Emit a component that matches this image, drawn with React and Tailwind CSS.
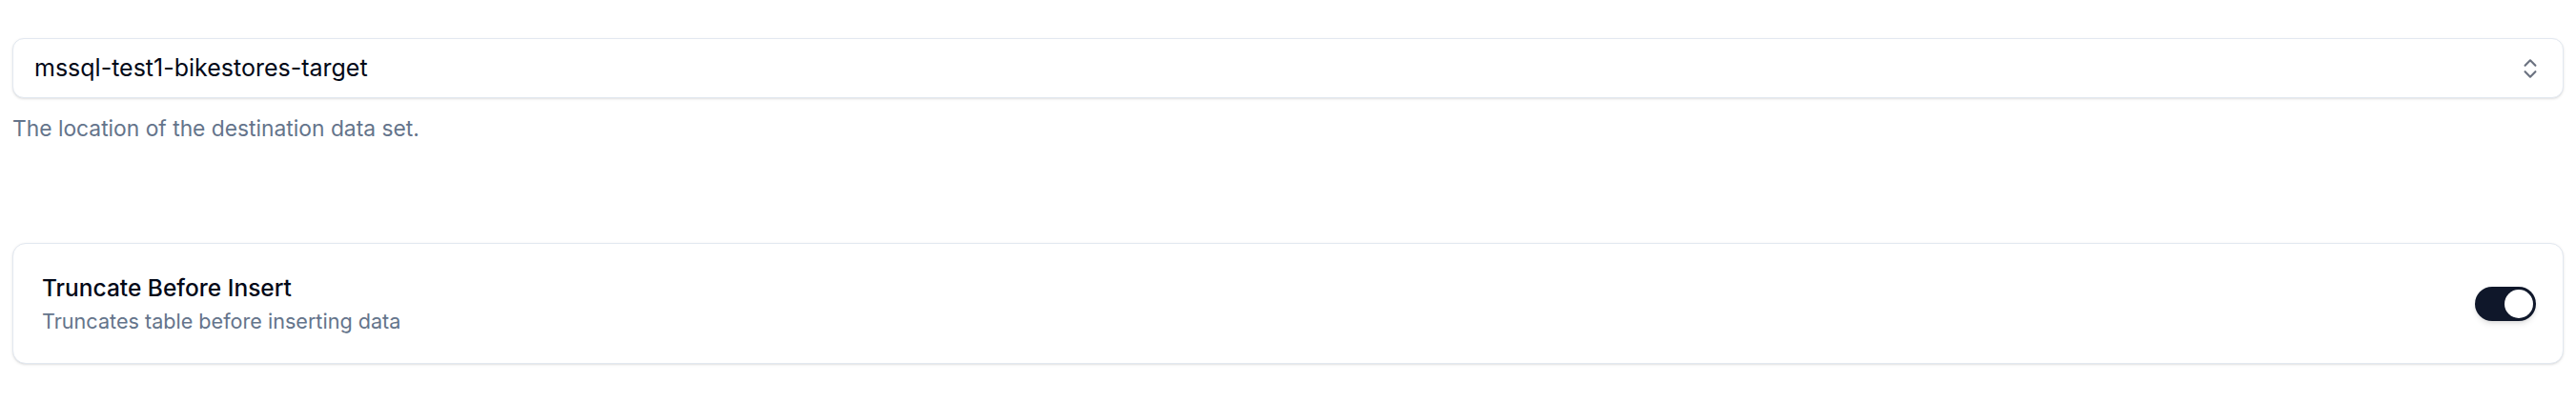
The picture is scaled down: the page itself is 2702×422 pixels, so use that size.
import React from "react";

function ChevronsUpDown() {
  return (
    <svg width="26" height="26" viewBox="0 0 24 24" fill="none" stroke="#6b7280" strokeWidth="2" strokeLinecap="round" strokeLinejoin="round">
      <path d="m7 15 5 5 5-5" />
      <path d="m7 9 5-5 5 5" />
    </svg>
  );
}

export default function App() {
  return (
    <div className="w-full bg-white px-[13px] pt-[40px] pb-[39px]" style={{ fontFamily: "Inter, 'Noto Sans', sans-serif" }}>
      <div className="flex h-[63px] items-center justify-between rounded-[12px] border border-[#e2e8f0] bg-white pl-[22px] pr-[21px] shadow-sm">
        <span className="text-[25px] text-[#020817]">mssql-test1-bikestores-target</span>
        <ChevronsUpDown />
      </div>
      <p className="mt-[16px] text-[22.8px] leading-[32px] text-[#64748b]">The location of the destination data set.</p>
      <div className="mt-[104px] flex h-[127px] items-center justify-between rounded-[14px] border border-[#e2e8f0] bg-white pl-[30px] pr-[28px] shadow-sm">
        <div className="flex flex-col">
          <span className="text-[24.5px] leading-[34px] font-medium text-[#020817]">Truncate Before Insert</span>
          <span className="mt-[2px] text-[21.6px] leading-[32px] text-[#64748b]">Truncates table before inserting data</span>
        </div>
        <div className="flex h-[36px] w-[64px] items-center rounded-full bg-[#0f172a] p-[3px] shadow-md">
          <div className="ml-auto h-[30px] w-[30px] rounded-full bg-white" />
        </div>
      </div>
    </div>
  );
}
